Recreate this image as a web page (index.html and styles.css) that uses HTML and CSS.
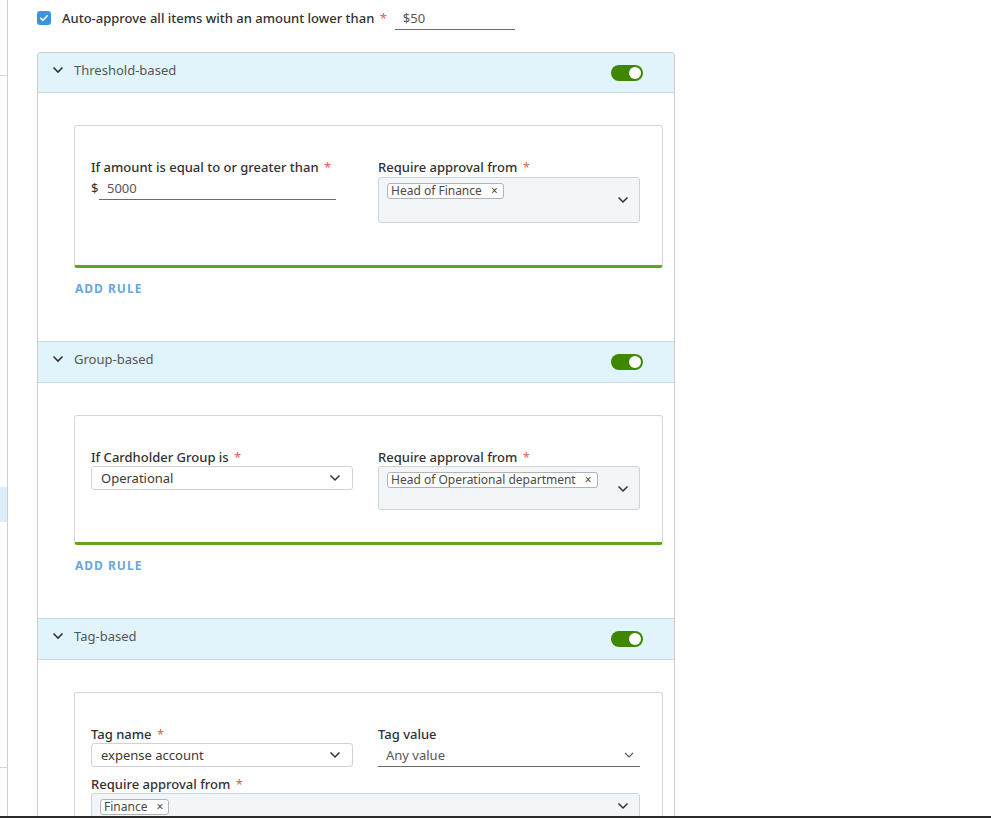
FILE: index.html
```html
<!DOCTYPE html>
<html lang="en">
<head>
  <meta charset="UTF-8">
  <title>Approval rules</title>
  <link rel="stylesheet" href="styles.css">
</head>
<body>
  <div class="screen">
    <div class="viewport">
      <!-- thin edge of the side navigation -->
      <aside class="side-edge">
        <div class="edge-line edge-line-top"></div>
        <div class="edge-active"></div>
        <div class="edge-line edge-line-bottom"></div>
      </aside>

      <main class="content">
        <div class="auto-row">
          <span class="checkbox">
            <svg width="10" height="10" viewBox="0 0 10 10"><path d="M1.8 5.2 L4 7.3 L8.3 2.8" fill="none" stroke="#fff" stroke-width="1.6" stroke-linecap="round" stroke-linejoin="round"/></svg>
          </span>
          <span class="auto-label">Auto-approve all items with an amount lower than <span class="req">*</span></span>
          <span class="line-input auto-input">$50</span>
        </div>

        <div class="panel">
          <!-- Threshold -->
          <section class="rule-group">
            <header class="group-head group-head-first">
              <svg class="chev" width="12" height="8" viewBox="0 0 12 8"><path d="M1.5 1.5 L6 6 L10.5 1.5" fill="none" stroke="#313131" stroke-width="1.6"/></svg>
              <span class="group-title">Threshold-based</span>
              <span class="toggle"><span class="knob"></span></span>
            </header>
            <div class="group-body">
              <div class="rule-card rule-card-tall">
                <div class="rule-grid">
                  <div class="field">
                    <label class="field-label">If amount is equal to or greater than <span class="req">*</span></label>
                    <div class="money">
                      <span class="money-sign">$</span>
                      <span class="line-input money-input">5000</span>
                    </div>
                  </div>
                  <div class="field">
                    <label class="field-label">Require approval from <span class="req">*</span></label>
                    <div class="multi">
                      <span class="tag">Head of Finance <span class="tag-x">×</span></span>
                      <svg class="multi-chev" width="12" height="8" viewBox="0 0 12 8"><path d="M1.5 1.5 L6 6 L10.5 1.5" fill="none" stroke="#313131" stroke-width="1.5"/></svg>
                    </div>
                  </div>
                </div>
              </div>
              <a class="add-rule">ADD RULE</a>
            </div>
          </section>

          <!-- Group -->
          <section class="rule-group">
            <header class="group-head">
              <svg class="chev" width="12" height="8" viewBox="0 0 12 8"><path d="M1.5 1.5 L6 6 L10.5 1.5" fill="none" stroke="#313131" stroke-width="1.6"/></svg>
              <span class="group-title">Group-based</span>
              <span class="toggle"><span class="knob"></span></span>
            </header>
            <div class="group-body">
              <div class="rule-card">
                <div class="rule-grid">
                  <div class="field">
                    <label class="field-label">If Cardholder Group is <span class="req">*</span></label>
                    <div class="select">
                      <span>Operational</span>
                      <svg width="12" height="8" viewBox="0 0 12 8"><path d="M1.5 1.5 L6 6 L10.5 1.5" fill="none" stroke="#313131" stroke-width="1.5"/></svg>
                    </div>
                  </div>
                  <div class="field">
                    <label class="field-label">Require approval from <span class="req">*</span></label>
                    <div class="multi multi-short">
                      <span class="tag">Head of Operational department <span class="tag-x">×</span></span>
                      <svg class="multi-chev" width="12" height="8" viewBox="0 0 12 8"><path d="M1.5 1.5 L6 6 L10.5 1.5" fill="none" stroke="#313131" stroke-width="1.5"/></svg>
                    </div>
                  </div>
                </div>
              </div>
              <a class="add-rule">ADD RULE</a>
            </div>
          </section>

          <!-- Tag -->
          <section class="rule-group">
            <header class="group-head">
              <svg class="chev" width="12" height="8" viewBox="0 0 12 8"><path d="M1.5 1.5 L6 6 L10.5 1.5" fill="none" stroke="#313131" stroke-width="1.6"/></svg>
              <span class="group-title">Tag-based</span>
              <span class="toggle"><span class="knob"></span></span>
            </header>
            <div class="group-body">
              <div class="rule-card">
                <div class="rule-grid">
                  <div class="field">
                    <label class="field-label">Tag name <span class="req">*</span></label>
                    <div class="select">
                      <span>expense account</span>
                      <svg width="12" height="8" viewBox="0 0 12 8"><path d="M1.5 1.5 L6 6 L10.5 1.5" fill="none" stroke="#313131" stroke-width="1.5"/></svg>
                    </div>
                  </div>
                  <div class="field">
                    <label class="field-label">Tag value</label>
                    <div class="line-select">
                      <span>Any value</span>
                      <svg width="10" height="6" viewBox="0 0 10 6"><path d="M1 1 L5 5 L9 1" fill="none" stroke="#555" stroke-width="1.1"/></svg>
                    </div>
                  </div>
                  <div class="field field-wide">
                    <label class="field-label">Require approval from <span class="req">*</span></label>
                    <div class="multi">
                      <span class="tag">Finance <span class="tag-x">×</span></span>
                      <svg class="multi-chev multi-chev-top" width="12" height="8" viewBox="0 0 12 8"><path d="M1.5 1.5 L6 6 L10.5 1.5" fill="none" stroke="#313131" stroke-width="1.5"/></svg>
                    </div>
                  </div>
                </div>
              </div>
            </div>
          </section>
        </div>
      </main>
    </div>
    <div class="bottom-bar"></div>
  </div>
</body>
</html>
```

FILE: styles.css
```css
* { box-sizing: border-box; }
body {
  margin: 0;
  background: #fff;
  font-family: 'Noto Sans', 'Open Sans', sans-serif;
  color: #313131;
  font-size: 13px;
}
.screen {
  height: 818px;
  display: flex;
  flex-direction: column;
  overflow: hidden;
}
.viewport {
  flex: 1;
  display: flex;
  overflow: hidden;
}
.bottom-bar {
  height: 2px;
  background: #2b2b2b;
}
/* side nav edge */
.side-edge {
  width: 8px;
  flex: none;
  border-right: 1px solid #cfcfcf;
  display: flex;
  flex-direction: column;
}
.edge-line { border-top: 1px solid #d6d6d6; }
.edge-line-top { margin-top: 75px; }
.edge-active {
  margin-top: 411px;
  height: 35px;
  background: #dceefb;
}
.edge-line-bottom { margin-top: 245px; }

.content {
  flex: 1;
  padding-left: 29px;
}
/* top row */
.auto-row {
  display: flex;
  align-items: center;
  height: 36px;
  margin-bottom: 16px;
}
.checkbox {
  width: 14px;
  height: 14px;
  border-radius: 3px;
  background: #3a95dd;
  display: flex;
  align-items: center;
  justify-content: center;
  margin-right: 11px;
}
.auto-label {
  font-weight: 500;
  margin-right: 8px;
}
.req {
  color: #e0624e;
  font-weight: 400;
  margin-left: 2px;
}
.line-input {
  display: inline-block;
  color: #565656;
  border-bottom: 1px solid #6b6b6b;
  height: 24px;
  line-height: 24px;
}
.auto-input {
  width: 120px;
  padding-left: 8px;
}
/* panel */
.panel {
  width: 638px;
  border: 1px solid #cccccc;
  border-radius: 4px 4px 0 0;
  border-bottom: none;
}
.group-head {
  height: 42px;
  display: flex;
  align-items: center;
  background: #e1f4fb;
  border-top: 1px solid #c6d9e0;
  border-bottom: 1px solid #c6d9e0;
  padding: 0 31px 0 14px;
}
.group-head-first {
  height: 40px;
  border-top: none;
  border-radius: 3px 3px 0 0;
}
.chev {
  margin-right: 10px;
  margin-bottom: 6px;
}
.group-title {
  flex: 1;
  color: #565656;
  margin-bottom: 6px;
}
.toggle {
  width: 32px;
  height: 16px;
  border-radius: 8px;
  background: #3f8700;
  display: flex;
  align-items: center;
  justify-content: flex-end;
  padding-right: 2px;
}
.knob {
  width: 12px;
  height: 12px;
  border-radius: 50%;
  background: #fff;
}
.group-body {
  padding: 32px 11px 44px 36px;
}
.rule-card {
  border: 1px solid #d7d7d7;
  border-bottom: 3px solid #62a420;
  border-radius: 3px;
  padding: 32px 21px 32px 16px;
}
.rule-card-tall { padding-bottom: 42px; }
.rule-grid {
  display: grid;
  grid-template-columns: 262px 262px;
  column-gap: 25px;
  row-gap: 8px;
}
.field-wide { grid-column: 1 / 3; }
.field-label {
  display: block;
  font-weight: 500;
  line-height: 18px;
  height: 18px;
}
.rule-card-tall .field-label { margin-bottom: 1px; }
.money {
  display: flex;
  align-items: center;
  margin-top: -1px;
}
.money-sign {
  width: 8px;
  color: #313131;
}
.money-input {
  width: 237px;
  padding-left: 8px;
}
.multi {
  position: relative;
  height: 46px;
  background: #f3f6f8;
  border: 1px solid #cfd4d8;
  border-radius: 3px;
  padding: 3px 8px;
}
.multi-short { height: 44px; }
.tag {
  display: inline-block;
  font-size: 12px;
  line-height: 14px;
  color: #4a4a4a;
  border: 1px solid #b3b3b3;
  border-radius: 3px;
  background: #fff;
  padding: 0 5px 0 3px;
}
.tag-x {
  margin-left: 6px;
  font-size: 12px;
}
.multi-chev {
  position: absolute;
  right: 10px;
  top: 18px;
}
.multi-chev-top { top: 8px; }
.select {
  height: 24px;
  border: 1px solid #d2d2d2;
  border-radius: 3px;
  display: flex;
  align-items: center;
  justify-content: space-between;
  padding: 0 11px 0 9px;
  color: #3a3a3a;
}
.line-select {
  height: 24px;
  border-bottom: 1px solid #6b6b6b;
  display: flex;
  align-items: center;
  justify-content: space-between;
  padding: 0 6px 0 8px;
  color: #565656;
}
.add-rule {
  display: block;
  margin-top: 13px;
  font-size: 12px;
  line-height: 16px;
  font-weight: 700;
  letter-spacing: 1px;
  color: #6ba7dc;
  padding-left: 1px;
}
```
